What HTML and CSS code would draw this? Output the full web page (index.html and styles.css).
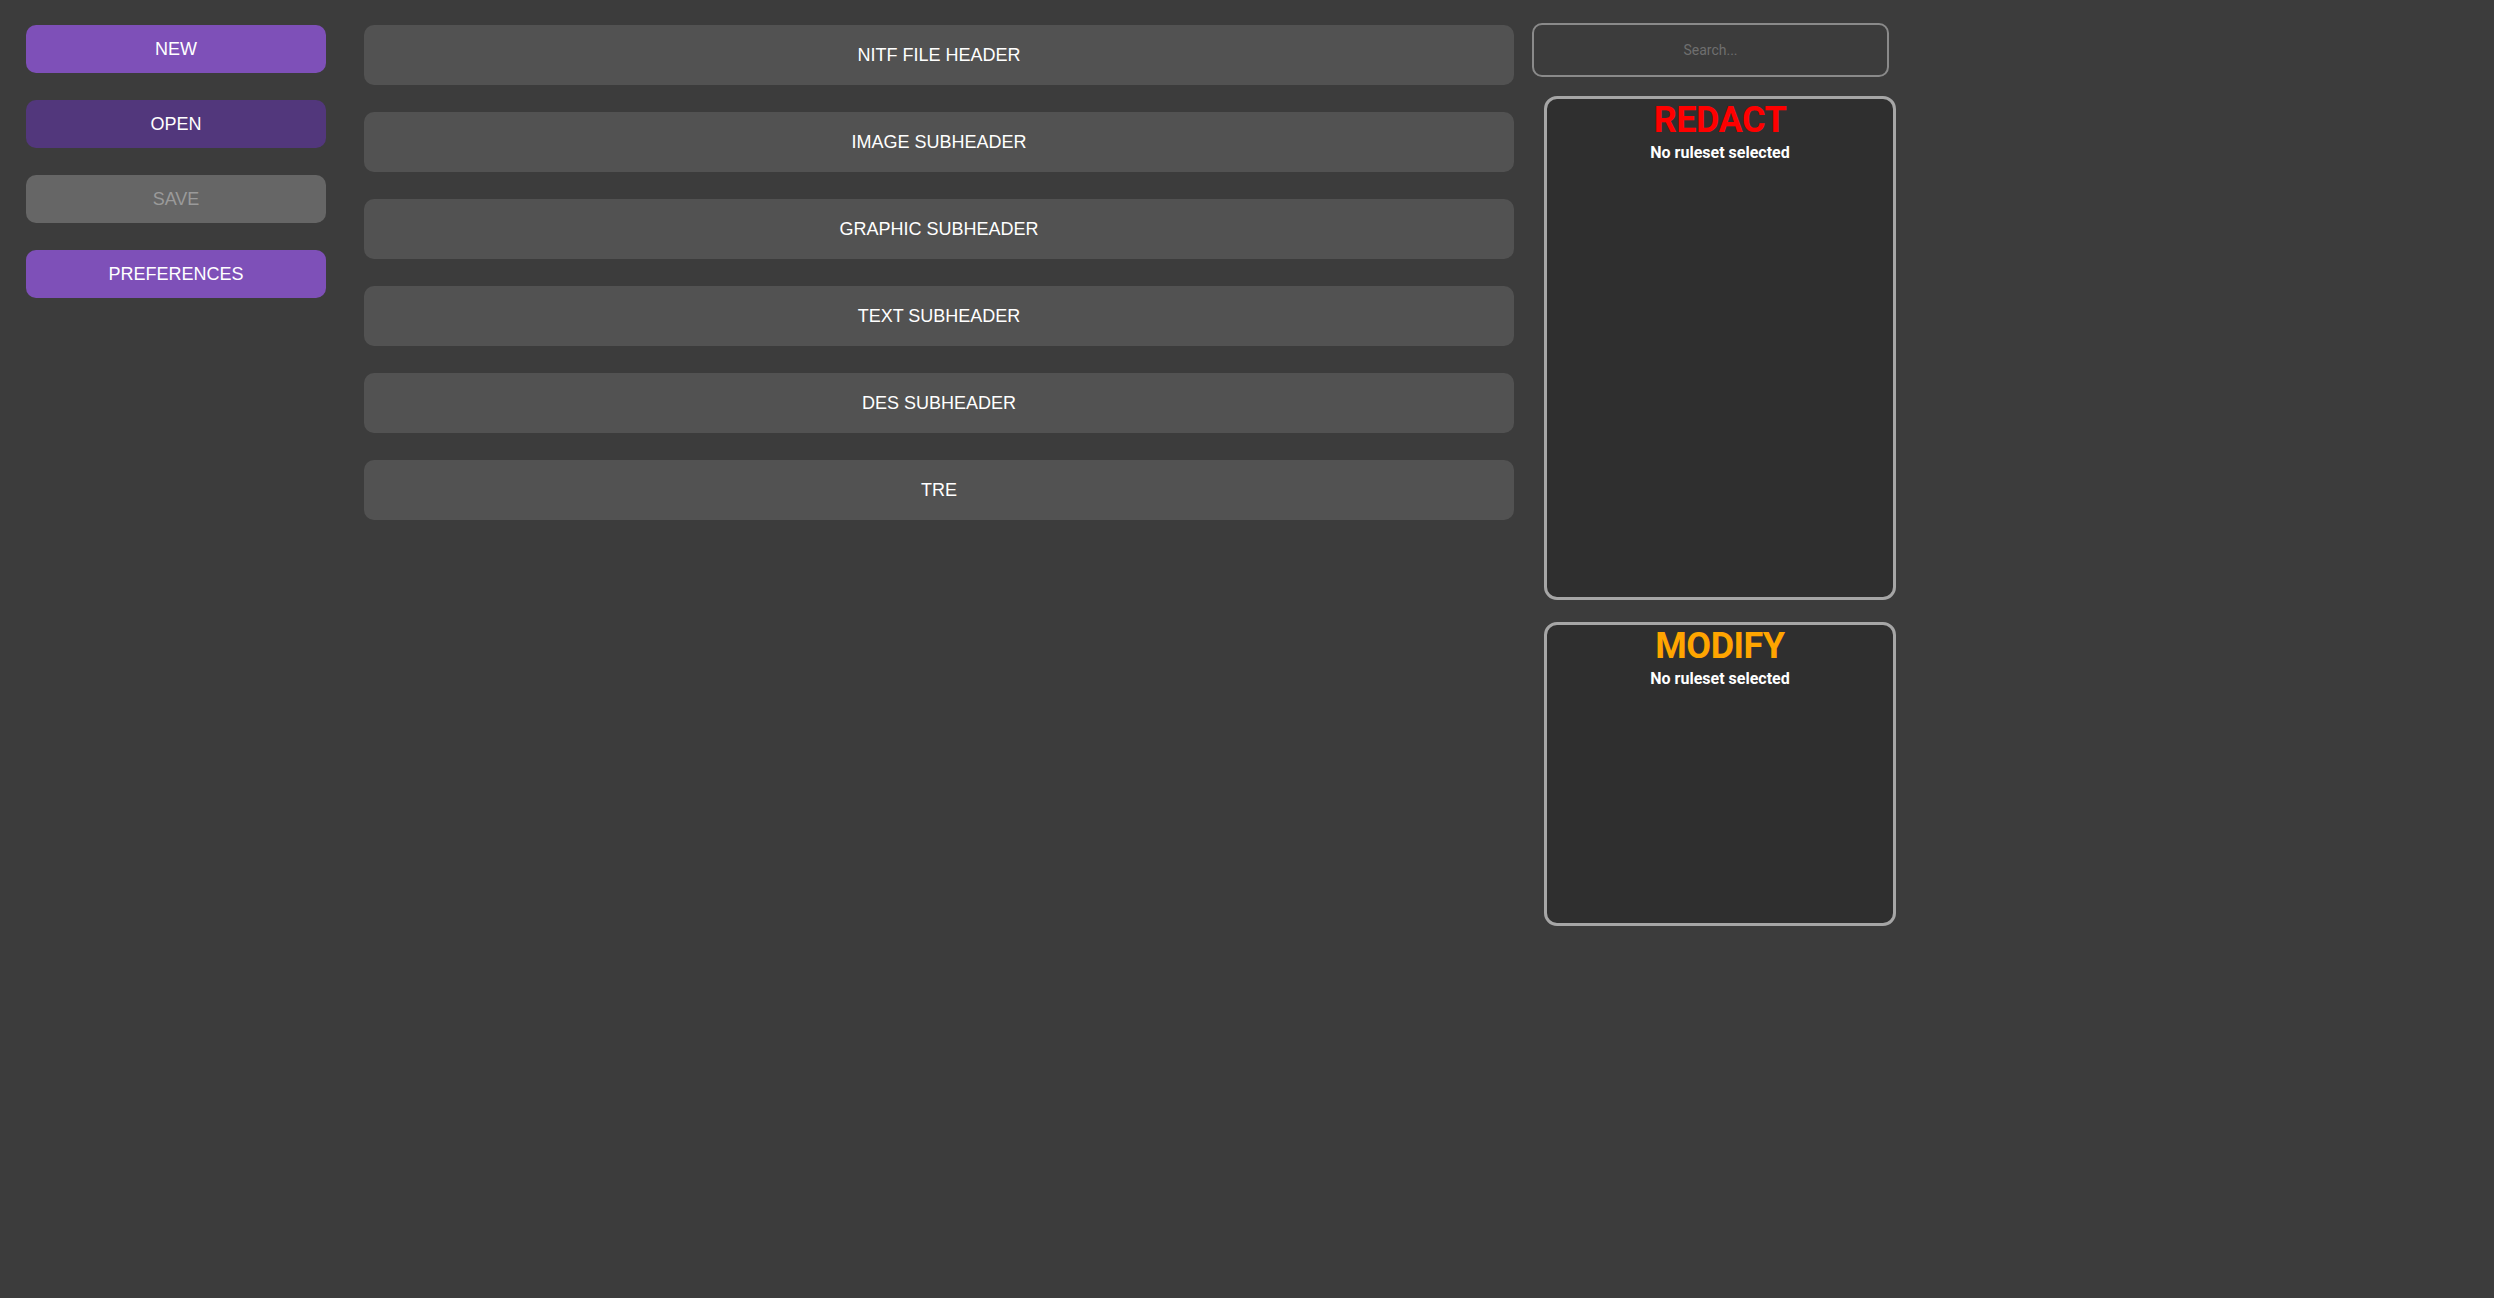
FILE: index.html
```html
<!DOCTYPE html>
<html lang="en">
<head>
<meta charset="utf-8">
<title>NITF Editor</title>
<link rel="stylesheet" href="styles.css">
</head>
<body>
<div class="app">
  <div class="sidebar">
    <button class="side-btn primary">NEW</button>
    <button class="side-btn active">OPEN</button>
    <button class="side-btn disabled">SAVE</button>
    <button class="side-btn primary">PREFERENCES</button>
  </div>
  <div class="sections">
    <button class="section-btn">NITF FILE HEADER</button>
    <button class="section-btn">IMAGE SUBHEADER</button>
    <button class="section-btn">GRAPHIC SUBHEADER</button>
    <button class="section-btn">TEXT SUBHEADER</button>
    <button class="section-btn">DES SUBHEADER</button>
    <button class="section-btn">TRE</button>
  </div>
  <div class="rules">
    <input class="search" type="text" placeholder="Search...">
    <div class="panel panel-redact">
      <div class="panel-title redact">REDACT</div>
      <div class="panel-sub">No ruleset selected</div>
    </div>
    <div class="panel panel-modify">
      <div class="panel-title modify">MODIFY</div>
      <div class="panel-sub">No ruleset selected</div>
    </div>
  </div>
</div>
</body>
</html>
```

FILE: styles.css
```css
html, body {
  margin: 0;
  padding: 0;
  background: #3c3c3c;
  height: 100%;
}

body {
  font-family: "Liberation Sans", Arial, sans-serif;
}

.app {
  display: flex;
  align-items: flex-start;
  padding: 25px 26px;
}

.sidebar {
  display: flex;
  flex-direction: column;
  gap: 27px;
  width: 300px;
  flex: none;
}

.side-btn {
  height: 48px;
  border: none;
  border-radius: 10px;
  font-family: "Liberation Sans", Arial, sans-serif;
  font-size: 18px;
  color: #ffffff;
  padding: 0;
  cursor: pointer;
}

.side-btn.primary {
  background: #7e50b8;
}

.side-btn.active {
  background: #52377c;
}

.side-btn.disabled {
  background: #666666;
  color: #9a9a9a;
}

.sections {
  display: flex;
  flex-direction: column;
  gap: 27px;
  width: 1150px;
  flex: none;
  margin-left: 38px;
}

.section-btn {
  height: 60px;
  border: none;
  border-radius: 10px;
  background: #525252;
  color: #ffffff;
  font-family: "Liberation Sans", Arial, sans-serif;
  font-size: 18px;
  padding: 0;
}

.rules {
  display: flex;
  flex-direction: column;
  margin-left: 18px;
  margin-top: -2px;
  width: 364px;
  flex: none;
}

.search {
  box-sizing: border-box;
  width: 357px;
  height: 54px;
  background: #3c3c3c;
  border: 2px solid #8a8a8a;
  border-radius: 10px;
  text-align: center;
  font-family: Roboto, sans-serif;
  font-size: 14px;
  color: #dddddd;
  outline: none;
  margin: 0;
}

.search::placeholder {
  color: #6f6f6f;
}

.panel {
  box-sizing: border-box;
  width: 352px;
  margin-left: 12px;
  background: #2f2f2f;
  border: 3px solid #a6a6a6;
  border-radius: 13px;
  text-align: center;
  font-family: Roboto, sans-serif;
}

.panel-redact {
  height: 504px;
  margin-top: 19px;
}

.panel-modify {
  height: 304px;
  margin-top: 22px;
}

.panel-title {
  font-size: 36px;
  font-weight: bold;
  letter-spacing: -0.5px;
}

.panel-title.redact {
  color: #ff0000;
}

.panel-title.modify {
  color: #ffa500;
}

.panel-sub {
  font-size: 16px;
  font-weight: bold;
  color: #ffffff;
  margin-top: 2px;
}
```
